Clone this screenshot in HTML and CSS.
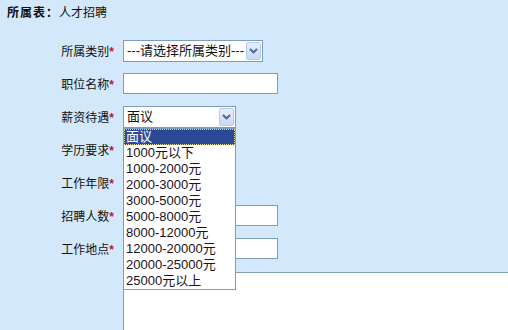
FILE: index.html
```html
<!DOCTYPE html>
<html lang="zh-CN">
<head>
<meta charset="utf-8">
<title>人才招聘</title>
<link rel="stylesheet" href="styles.css">
</head>
<body>
<div class="title"><b>所属表：</b>人才招聘</div>
<form class="form">
  <div class="row">
    <label class="lbl">所属类别<em>*</em></label>
    <div class="sel w140"><span class="val">---请选择所属类别---</span><span class="btn"><svg width="9" height="6" viewBox="0 0 9 6"><path d="M1 1 L4.5 4.5 L8 1" fill="none" stroke="#4d6185" stroke-width="1.8"/></svg></span></div>
  </div>
  <div class="row">
    <label class="lbl">职位名称<em>*</em></label>
    <input class="inp w155" type="text">
  </div>
  <div class="row">
    <label class="lbl">薪资待遇<em>*</em></label>
    <div class="sel w113 open"><span class="val">面议</span><span class="btn"><svg width="9" height="6" viewBox="0 0 9 6"><path d="M1 1 L4.5 4.5 L8 1" fill="none" stroke="#4d6185" stroke-width="1.8"/></svg></span>
      <ul class="list">
        <li class="on">面议</li>
        <li>1000元以下</li>
        <li>1000-2000元</li>
        <li>2000-3000元</li>
        <li>3000-5000元</li>
        <li>5000-8000元</li>
        <li>8000-12000元</li>
        <li>12000-20000元</li>
        <li>20000-25000元</li>
        <li>25000元以上</li>
      </ul>
    </div>
  </div>
  <div class="row">
    <label class="lbl">学历要求<em>*</em></label>
  </div>
  <div class="row">
    <label class="lbl">工作年限<em>*</em></label>
  </div>
  <div class="row">
    <label class="lbl">招聘人数<em>*</em></label>
    <input class="inp w155" type="text">
  </div>
  <div class="row">
    <label class="lbl">工作地点<em>*</em></label>
    <input class="inp w155" type="text">
  </div>
  <div class="row last">
    <span class="lbl"></span>
    <textarea class="area"></textarea>
  </div>
</form>
</body>
</html>
```
FILE: styles.css
```css
html, body {
  margin: 0;
  padding: 0;
  background: #d4e8fb;
  overflow: hidden;
  height: 330px;
}
body {
  font-family: "Noto Sans CJK SC", "Liberation Sans", sans-serif;
  font-size: 12px;
  color: #111;
}
.title {
  padding: 4px 7px;
  line-height: 16px;
  height: 16px;
}
.title b {
  font-weight: bold;
  letter-spacing: 1px;
}
.form {
  margin: 0;
  padding-top: 16px;
}
.row {
  display: flex;
  align-items: flex-start;
  height: 33px;
  gap: 9px;
}
.row.last {
  height: 58px;
  padding-top: 1px;
}
.lbl {
  width: 114px;
  flex: none;
  text-align: right;
  line-height: 22px;
  font-size: 12px;
}
.lbl em {
  font-style: normal;
  color: #c8102e;
  font-family: "Liberation Sans", sans-serif;
  font-weight: bold;
  font-size: 12px;
}
.sel {
  position: relative;
  display: flex;
  align-items: stretch;
  box-sizing: border-box;
  height: 22px;
  background: #fff;
  border: 1px solid #7f9db9;
  font-family: "Liberation Sans", "Noto Sans CJK SC", sans-serif;
  font-size: 13px;
}
.w140 { width: 140px; }
.w113 { width: 113px; }
.w155 { width: 155px; }
.val {
  flex: 1;
  padding-left: 3px;
  line-height: 20px;
  white-space: nowrap;
  overflow: hidden;
}
.btn {
  flex: none;
  width: 15px;
  margin: 1px;
  box-sizing: border-box;
  border: 1px solid #b9cbed;
  border-radius: 2px;
  background: linear-gradient(#e6eefc, #c8d8f6);
  display: flex;
  align-items: center;
  justify-content: center;
}
.inp {
  box-sizing: border-box;
  height: 21px;
  margin: 0;
  border: 1px solid #7f9db9;
  background: #fff;
  padding: 0 2px;
}
.area {
  display: block;
  box-sizing: border-box;
  width: 385px;
  height: 58px;
  margin: 0;
  border: 1px solid #7f9db9;
  border-right: none;
  border-bottom: none;
  background: #fff;
  resize: none;
}
.list {
  position: absolute;
  left: -1px;
  top: 21px;
  width: 113px;
  box-sizing: border-box;
  margin: 0;
  padding: 0;
  list-style: none;
  background: #fff;
  border: 1px solid #7f9db9;
  z-index: 2;
}
.list li {
  height: 16px;
  line-height: 16px;
  padding-left: 2px;
  color: #1c1020;
  white-space: nowrap;
}
.list li.on {
  background: #2a4a96;
  color: #fff;
  outline: 1px dotted #d8d8a0;
  outline-offset: -1px;
}
```
